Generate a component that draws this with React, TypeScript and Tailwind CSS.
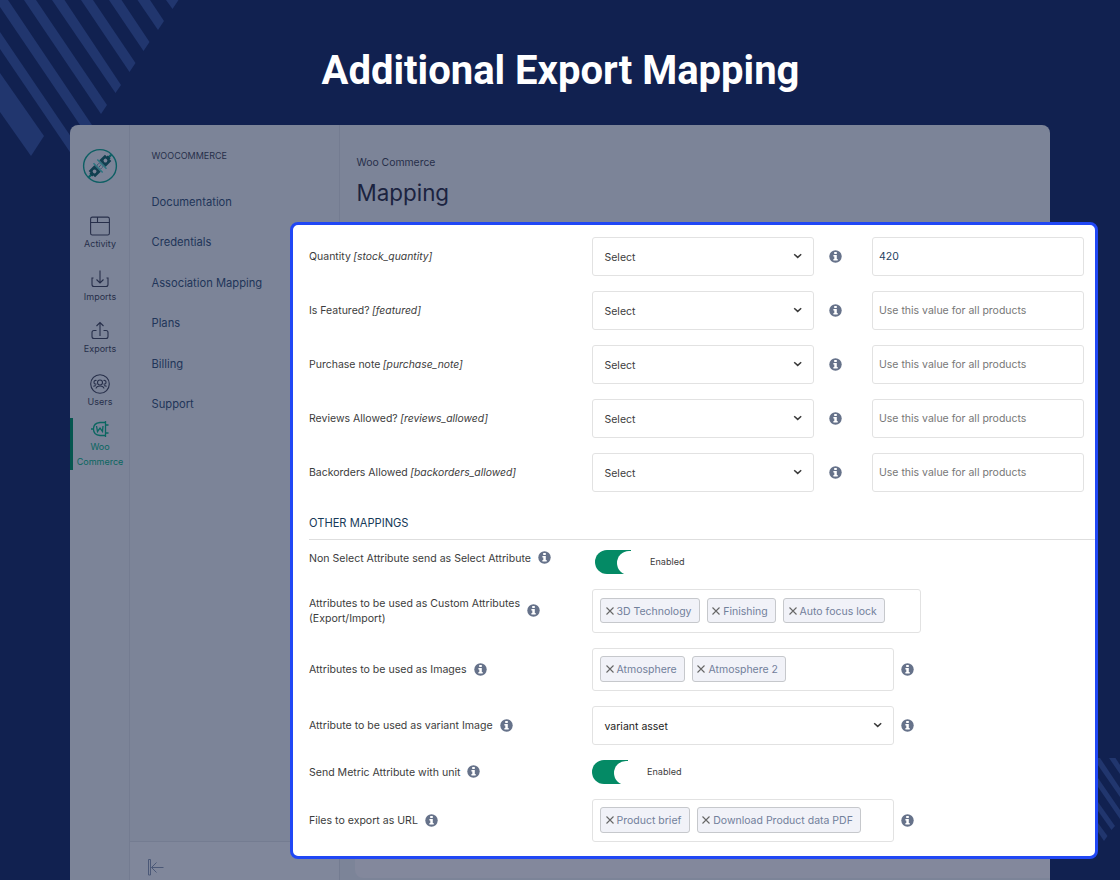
import React from "react";

const font = "font-[Inter,'Liberation_Sans',sans-serif]";

const menu = ["Documentation", "Credentials", "Association Mapping", "Plans", "Billing", "Support"];

const fields = [
  { label: "Quantity", code: "stock_quantity", value: "420" },
  { label: "Is Featured?", code: "featured", value: "" },
  { label: "Purchase note", code: "purchase_note", value: "" },
  { label: "Reviews Allowed?", code: "reviews_allowed", value: "" },
  { label: "Backorders Allowed", code: "backorders_allowed", value: "" },
];

const Stripes: React.FC = () => (
  <svg className="absolute inset-0" width="1120" height="880" fill="#21366e">
    <path d="M0 73L44 136L31 156L0 112Z" />
    <path d="M0 32L84 156L74 158L0 49Z" />
    <path d="M0 0H8L92 125L80 125L0 7Z" />
    <path d="M24 0H36L107 105L101 114Z" />
    <path d="M52 0H64.5L121 85L115.5 93Z" />
    <path d="M81 0H93L135.500 63L129.500 72Z" />
    <path d="M109 0H121.500L149.500 42L143.500 51Z" />
    <path d="M137.500 0H150L164 21L158 30Z" />
    <path d="M166 0H178.500L172.500 9Z" />
    <path d="M1109 758H1115.500L1120 765V774Z" />
    <path d="M1093 758H1100L1120 788V797Z" />
    <path d="M1098 778L1120 810V819L1098 787Z" />
    <path d="M1098 802L1115 826L1111.500 830L1098 811Z" />
    <path d="M1098 823L1107.500 836L1104 841L1098 832Z" />
  </svg>
);

const Logo: React.FC = () => (
  <svg width="36" height="36" viewBox="0 0 36 36" fill="none">
    <circle cx="18" cy="18" r="16.400" stroke="#0d5f64" strokeWidth="1.400" />
    <g transform="rotate(-45 18 18)">
      <path d="M2 18H6M30 18H34" stroke="#0d5f64" strokeWidth="2.200" />
      <path d="M15.300 11.500V24.500M20.700 11.500V24.500" stroke="#2a7480" strokeWidth="1.500" />
      <path d="M5 16H6.500V13.500H14.500V22.500H6.500V20H5Z" fill="#113f50" />
      <path d="M31 16H29.500V13.500H21.500V22.500H29.500V20H31Z" fill="#113f50" />
      <circle cx="10.300" cy="18" r="1.900" fill="#7c8498" />
      <circle cx="25.700" cy="18" r="1.900" fill="#7c8498" />
      <path d="M16.500 15.500H19.500M16.500 18H19.500M16.500 20.500H19.500" stroke="#33506a" strokeWidth="1" strokeDasharray="1.200 0.800" />
    </g>
  </svg>
);

const ActivityIcon: React.FC = () => (
  <svg width="20" height="20" viewBox="0 0 20 20" fill="none" stroke="#272f4a" strokeWidth="1.100">
    <rect x="0.600" y="1.100" width="18.800" height="17.900" rx="1.800" />
    <path d="M0.600 6.500H19.400M7.500 1.100V6.500" />
  </svg>
);

const ImportIcon: React.FC = () => (
  <svg width="20" height="20" viewBox="0 0 20 20" fill="none" stroke="#272f4a" strokeWidth="1.100">
    <path d="M3.500 9H2V15.500Q2 17.500 4 17.500H16Q18 17.500 18 15.500V9H16.500" />
    <path d="M10 1.500V14M6.500 10.500L10 14L13.500 10.500" />
  </svg>
);

const ExportIcon: React.FC = () => (
  <svg width="20" height="20" viewBox="0 0 20 20" fill="none" stroke="#272f4a" strokeWidth="1.100">
    <path d="M6.500 9.500H4Q2 9.500 2 11.500V15.500Q2 17.500 4 17.500H16Q18 17.500 18 15.500V11.500Q18 9.500 16 9.500H13.500" />
    <path d="M10 15V1.500M6.500 5L10 1.500L13.500 5" />
  </svg>
);

const UsersIcon: React.FC = () => (
  <svg width="20" height="20" viewBox="0 0 20 20" fill="none" stroke="#272f4a" strokeWidth="1.100">
    <circle cx="10" cy="10" r="9.300" />
    <circle cx="10" cy="8.500" r="2.500" />
    <path d="M6 14.500Q6.500 12 10 12T14 14.500M6.500 6.500Q4 6 4 8.300T6.500 10M13.500 6.500Q16 6 16 8.300T13.500 10M3.500 12.500Q4 11.500 6 11.800M16.500 12.500Q16 11.500 14 11.800" />
  </svg>
);

const PlugIcon: React.FC = () => (
  <svg width="20" height="18" viewBox="0 0 20 18" fill="none" stroke="#0a6660" strokeWidth="1.300">
    <path d="M15 2.500H10Q3.500 3 3.500 9T10 15.500H15M1 9H3.500M15.500 1V17M15.500 5H18.500M15.500 13H18.500" />
    <path d="M6.500 6L7.500 11.500L10 8L12.500 11.500L13 6" />
  </svg>
);

const Info: React.FC = () => (
  <svg className="-mt-px shrink-0" width="13" height="13" viewBox="0 0 13 13">
    <circle cx="6.500" cy="6.500" r="6.200" fill="#66728a" />
    <path d="M5.200 1.900H7.800V4H5.200ZM4.400 5H7.800V9.100H8.700V10.600H4.400V9.100H5.300V6.400H4.400Z" fill="#fff" />
  </svg>
);

const Chevron: React.FC = () => (
  <svg className="-mt-px" width="9" height="6" viewBox="0 0 9 6" fill="none" stroke="#3a3a3a" strokeWidth="1.500">
    <path d="M1.200 1.200L4.700 4.400L8.200 1.200" />
  </svg>
);

const Select: React.FC<{ value: string; className: string }> = ({ value, className }) => (
  <div className={`flex h-[39px] items-center justify-between rounded-[3px] border border-[#e2e2e2] pl-[11.500px] pr-[11.500px] ${className}`}>
    <span className="pt-0.5">{value}</span>
    <Chevron />
  </div>
);

const Tags: React.FC<{ items: string[]; className: string }> = ({ items, className }) => (
  <div className={`flex gap-[7px] rounded-[3px] border border-[#e2e2e2] px-[7px] ${className}`}>
    {items.map((item) => (
      <span
        key={item}
        className="flex items-center gap-[3px] whitespace-nowrap rounded-[3px] border border-[#c6c8cc] bg-[#f1f2f8] pl-[4.500px] pr-[7.300px] text-[#71809b]"
      >
        <svg width="8" height="8" viewBox="0 0 8 8" stroke="#666" strokeWidth="1.100">
          <path d="M0.500 0.500L7.500 7.500M7.500 0.500L0.500 7.500" />
        </svg>
        <span className="pt-0.5">{item}</span>
      </span>
    ))}
  </div>
);

const Toggle: React.FC = () => (
  <div className="flex items-center text-[9.100px]">
    <div className="h-6 w-9 overflow-hidden rounded-l-full bg-[#048a65]">
      <div className="ml-[22px] mt-[0.500px] h-6 w-6 rounded-l-full bg-white" />
    </div>
    <span className="ml-[19px]">Enabled</span>
  </div>
);

const Label: React.FC<{ children: React.ReactNode }> = ({ children }) => (
  <div className="flex w-[283px] shrink-0 items-center gap-[7px] text-[10.570px] leading-[15px]">
    <span>{children}</span>
    <Info />
  </div>
);

const NavItem: React.FC<{ label: string; icon: React.ReactNode }> = ({ label, icon }) => (
  <div className="flex h-[52.500px] flex-col items-center">
    {icon}
    <span className="mt-0.5 text-[9px] leading-[12px]">{label}</span>
  </div>
);

const Sidebar: React.FC = () => (
  <aside className="w-[60px] shrink-0 border-r border-[#747c91] pt-[23px] text-[#272f4a]">
    <div className="ml-px flex h-[68px] justify-center">
      <Logo />
    </div>
    <div className="ml-px">
      <NavItem label="Activity" icon={<ActivityIcon />} />
      <NavItem label="Imports" icon={<ImportIcon />} />
      <NavItem label="Exports" icon={<ExportIcon />} />
      <NavItem label="Users" icon={<UsersIcon />} />
    </div>
    <div className="-mt-2 flex h-[52px] flex-col items-center border-l-[3px] border-[#05564f] pr-[2px] pt-[2px] text-center text-[9px] leading-[15px] text-[#0a6660]">
      <PlugIcon />
      <span className="mt-px">
        Woo
        <br />
        Commerce
      </span>
    </div>
  </aside>
);

const Submenu: React.FC = () => (
  <nav className="flex w-[210px] shrink-0 flex-col border-r border-[#747c91]">
    <div className="flex-1 pl-[21.500px] pt-[23px]">
      <div className="mb-[18.500px] text-[9px] leading-[15px] text-[#272f4a]">WOOCOMMERCE</div>
      {menu.map((item) => (
        <div key={item} className="h-[40.500px] text-[11.200px] leading-[40.500px] text-[#213559]">
          {item}
        </div>
      ))}
    </div>
    <div className="h-[39px] border-t border-[#747c91] bg-[#80879b] pl-[18px] pt-[17px]">
      <svg width="16" height="17" viewBox="0 0 16 17" fill="none" stroke="#4b5877" strokeWidth="1">
        <path d="M0.500 0.500H2.500V16H0.500ZM15.500 8.500H3.500M8.500 3.500L3.500 8.500L8.500 13.500" />
      </svg>
    </div>
  </nav>
);

const MappingPanel: React.FC = () => (
  <section className="absolute left-[290px] top-[222px] h-[637px] w-[808px] rounded-lg border-[3px] border-[#2047f5] bg-white pl-4 pt-3 text-[10.500px] text-[#3c3c3c]">
    <div className="flex flex-col gap-[15px]">
      {fields.map((field) => (
        <div key={field.code} className="flex h-[39px] items-center">
          <div className="w-[283px] pt-px">
            {field.label} <em className="-ml-[0.500px] text-[10.350px]">[{field.code}]</em>
          </div>
          <Select value="Select" className="w-[222px]" />
          <div className="w-[58px] pl-[15px]">
            <Info />
          </div>
          <input
            className="h-[39px] w-[212px] rounded-[3px] border border-[#e2e2e2] px-[6px] text-[#24415f] placeholder:text-[#777]"
            defaultValue={field.value}
            placeholder="Use this value for all products"
          />
        </div>
      ))}
    </div>
    <h2 className="h-12 border-b border-[#dedede] pt-[22.500px] text-[11.150px] leading-4 text-[#173a59]">OTHER MAPPINGS</h2>
    <div className="mt-2.5 flex flex-col gap-[15px]">
      <div className="flex h-6">
        <div className="flex h-4">
          <Label>Non Select Attribute send as Select Attribute</Label>
        </div>
        <div className="ml-[3px]">
          <Toggle />
        </div>
      </div>
      <div className="flex h-11">
        <Label>
          Attributes to be used as Custom Attributes
          <br />
          (Export/Import)
        </Label>
        <Tags items={["3D Technology", "Finishing", "Auto focus lock"]} className="w-[329px] pb-[9px] pt-2" />
      </div>
      <div className="flex h-[43px] items-center">
        <Label>Attributes to be used as Images</Label>
        <Tags items={["Atmosphere", "Atmosphere 2"]} className="mr-[7px] h-[43px] w-[302px] pb-2 pt-[7px]" />
        <Info />
      </div>
      <div className="flex h-[39px] items-center">
        <Label>Attribute to be used as variant Image</Label>
        <Select value="variant asset" className="mr-[7px] w-[302px] text-[#222]" />
        <Info />
      </div>
      <div className="flex h-6 items-center">
        <Label>Send Metric Attribute with unit</Label>
        <Toggle />
      </div>
      <div className="flex h-[43px] items-center">
        <Label>Files to export as URL</Label>
        <Tags items={["Product brief", "Download Product data PDF"]} className="mr-[7px] h-[43px] w-[302px] pb-2 pt-[7px]" />
        <Info />
      </div>
    </div>
  </section>
);

const App: React.FC = () => {
  return (
    <div className={`relative h-[880px] w-[1120px] overflow-hidden bg-[#112150] ${font}`}>
      <Stripes />
      <div className="relative flex h-full flex-col">
        <h1 className="h-[125px] pl-px pt-[47px] text-center font-[Roboto,sans-serif] text-[40px] font-bold leading-[48px] text-white">
          Additional Export Mapping
        </h1>
        <div className="mx-[70px] flex flex-1 overflow-hidden rounded-t-lg bg-[#7c8498]">
          <Sidebar />
          <Submenu />
          <main className="flex flex-1 flex-col pl-[15px] text-[#1b2340]">
            <div className="flex-1 pl-[1.500px] pt-[30px]">
              <div className="text-[10.400px] leading-4 text-[#272f4a]">Woo Commerce</div>
              <div className="mt-[7px] text-[22.400px] leading-[30px]">Mapping</div>
            </div>
            <div className="mb-0.5 h-12 rounded-bl-lg bg-[#83889c]" />
          </main>
        </div>
      </div>
      <MappingPanel />
    </div>
  );
};

export default App;
